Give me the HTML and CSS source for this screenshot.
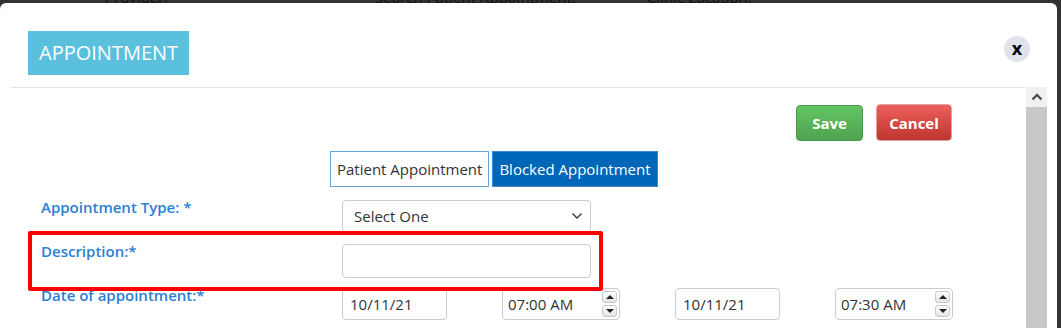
FILE: index.html
```html
<!DOCTYPE html>
<html>
<head>
    <title>Appointment</title>
    <link rel="stylesheet" href="styles.css">
</head>
<body>
    <!-- page behind the dialog, dimmed by the overlay -->
    <div class="backdrop">
        <span class="bg-label provider">Provider:</span>
        <span class="bg-label search">Search Patient Appointment:</span>
        <span class="bg-label clinic">Clinic Location:</span>
    </div>

    <div class="modal">
        <div class="modal-header">
            <div class="modal-title">APPOINTMENT</div>
            <button class="close-btn">x</button>
        </div>
        <div class="modal-body">
            <div class="form-area">
                <div class="actions">
                    <button class="btn btn-save">Save</button>
                    <button class="btn btn-cancel">Cancel</button>
                </div>

                <div class="toggle-group">
                    <button class="toggle">Patient Appointment</button>
                    <button class="toggle active">Blocked Appointment</button>
                </div>

                <div class="form-rows">
                    <div class="form-row">
                        <label>Appointment Type: *</label>
                        <div class="control select">
                            <span>Select One</span>
                            <svg width="12" height="8" viewBox="0 0 12 8"><path d="M1.5 1.5 L6 6 L10.5 1.5" fill="none" stroke="#333" stroke-width="1.3"/></svg>
                        </div>
                    </div>
                    <div class="form-row">
                        <label>Description:*</label>
                        <input class="control desc-input" type="text">
                    </div>
                    <div class="form-row">
                        <label>Date of appointment:*</label>
                        <div class="date-group">
                            <input class="control date-input" type="text" value="10/11/21">
                            <div class="control time-field">
                                <input type="text" value="07:00 AM">
                                <div class="spinner">
                                    <span class="spin"><i class="tri-up"></i></span>
                                    <span class="spin"><i class="tri-down"></i></span>
                                </div>
                            </div>
                            <input class="control date-input" type="text" value="10/11/21">
                            <div class="control time-field">
                                <input type="text" value="07:30 AM">
                                <div class="spinner">
                                    <span class="spin"><i class="tri-up"></i></span>
                                    <span class="spin"><i class="tri-down"></i></span>
                                </div>
                            </div>
                        </div>
                    </div>
                </div>

                <!-- red annotation box around the description row -->
                <div class="highlight"></div>
            </div>

            <div class="scrollbar">
                <div class="scroll-up">
                    <svg width="12" height="8" viewBox="0 0 12 8"><path d="M1.5 6.5 L6 2 L10.5 6.5" fill="none" stroke="#505050" stroke-width="2.4"/></svg>
                </div>
                <div class="scroll-thumb"></div>
            </div>
        </div>
    </div>
</body>
</html>
```

FILE: styles.css
```css
body {
    margin: 0;
    height: 100vh;
    overflow: hidden;
    position: relative;
    background: #333;
    font-family: "Open Sans", sans-serif;
}

/* Page content behind the overlay */
.backdrop {
    display: flex;
    margin-top: -13px;
    height: 20px;
    font-size: 15px;
    line-height: 20px;
    color: #111;
}

.bg-label.provider {
    margin-left: 105px;
    width: 270px;
}

.bg-label.search {
    width: 272px;
}

/* Dialog */
.modal {
    position: absolute;
    top: 3px;
    left: 0;
    bottom: 0;
    width: 1057px;
    box-sizing: border-box;
    padding: 0 10px 0 11px;
    background: #fff;
    border-radius: 6px 6px 0 0;
    display: flex;
    flex-direction: column;
}

.modal-header {
    flex-shrink: 0;
    height: 84px;
    box-sizing: border-box;
    padding: 28px 17px 0 17px;
    display: flex;
    justify-content: space-between;
    align-items: flex-start;
}

.modal-title {
    height: 44px;
    line-height: 44px;
    padding: 0 11px;
    background: #5bc0de;
    color: #fff;
    font-size: 20px;
}

.close-btn {
    width: 26px;
    height: 26px;
    margin-top: 5px;
    padding: 0 0 3px 0;
    border: none;
    border-radius: 50%;
    background: #dfe3eb;
    color: #000;
    font-family: "Open Sans", sans-serif;
    font-size: 18px;
    font-weight: 700;
    line-height: 20px;
}

.modal-body {
    flex: 1;
    min-height: 0;
    overflow: hidden;
    display: flex;
}

.form-area {
    flex: 1;
    position: relative;
    border-top: 1px solid #e5e5e5;
}

/* Save / Cancel */
.actions {
    display: flex;
    justify-content: flex-end;
    align-items: flex-end;
    gap: 13px;
    padding: 16px 74px 0 0;
}

.btn {
    height: 37px;
    padding: 0;
    border-radius: 4px;
    color: #fff;
    font-family: "Open Sans", sans-serif;
    font-size: 15px;
    font-weight: 700;
}

.btn-save {
    width: 67px;
    height: 36px;
    background: linear-gradient(#62c462, #51a351);
    border: 1px solid #4b9a4b;
}

.btn-cancel {
    width: 76px;
    background: linear-gradient(#ee5f5b, #bd362f);
    border: 1px solid #dba3a3;
}

/* Patient / Blocked toggle */
.toggle-group {
    display: flex;
    gap: 3px;
    margin: 10px 0 0 319px;
}

.toggle {
    height: 36px;
    padding: 0 6px;
    border: 1px solid #6aa3d5;
    background: #fff;
    color: #333;
    font-family: "Open Sans", sans-serif;
    font-size: 15px;
}

.toggle.active {
    background: #0066b8;
    border-color: #3f86cc;
    color: #fff;
}

/* Form */
.form-rows {
    margin-top: 13px;
    padding-left: 30px;
}

.form-row {
    display: grid;
    grid-template-columns: 301px auto;
    height: 44px;
}

.form-row label {
    margin-top: -3px;
    color: #2a7fd6;
    font-size: 15px;
    font-weight: 600;
    line-height: 20px;
}

.control {
    height: 32px;
    box-sizing: border-box;
    border: 1px solid #ccc;
    border-radius: 4px;
    background: #fff;
    color: #333;
    font-family: "Open Sans", sans-serif;
    font-size: 15px;
}

.select {
    width: 249px;
    padding: 0 7px 0 11px;
    display: flex;
    align-items: center;
    justify-content: space-between;
}

.desc-input {
    width: 249px;
    height: 34px;
}

.date-group {
    display: flex;
    gap: 55px;
}

.date-input {
    width: 105px;
    padding: 0 7px;
}

.time-field {
    width: 118px;
    display: flex;
    align-items: center;
    padding-right: 2px;
}

.time-field input {
    flex: 1;
    width: 0;
    border: none;
    outline: none;
    background: transparent;
    padding: 0 5px;
    color: #333;
    font-family: "Open Sans", sans-serif;
    font-size: 15px;
}

.spinner {
    display: flex;
    flex-direction: column;
    gap: 2px;
}

.spin {
    width: 15px;
    height: 12px;
    box-sizing: border-box;
    border: 1px solid #c9c9c9;
    border-radius: 3px;
    background: linear-gradient(#fff, #e4e4e4);
    display: flex;
    align-items: center;
    justify-content: center;
}

.tri-up {
    border-left: 4px solid transparent;
    border-right: 4px solid transparent;
    border-bottom: 4px solid #222;
}

.tri-down {
    border-left: 4px solid transparent;
    border-right: 4px solid transparent;
    border-top: 4px solid #222;
}

.highlight {
    position: absolute;
    left: 17px;
    top: 143px;
    width: 575px;
    height: 60px;
    box-sizing: border-box;
    border: 4px solid #ff0000;
    border-radius: 2px;
}

/* Fake scrollbar */
.scrollbar {
    width: 21px;
    background: #f1f1f1;
    display: flex;
    flex-direction: column;
}

.scroll-up {
    height: 20px;
    display: flex;
    align-items: center;
    justify-content: center;
}

.scroll-thumb {
    flex: 1;
    background: #c8c8c8;
}
```
